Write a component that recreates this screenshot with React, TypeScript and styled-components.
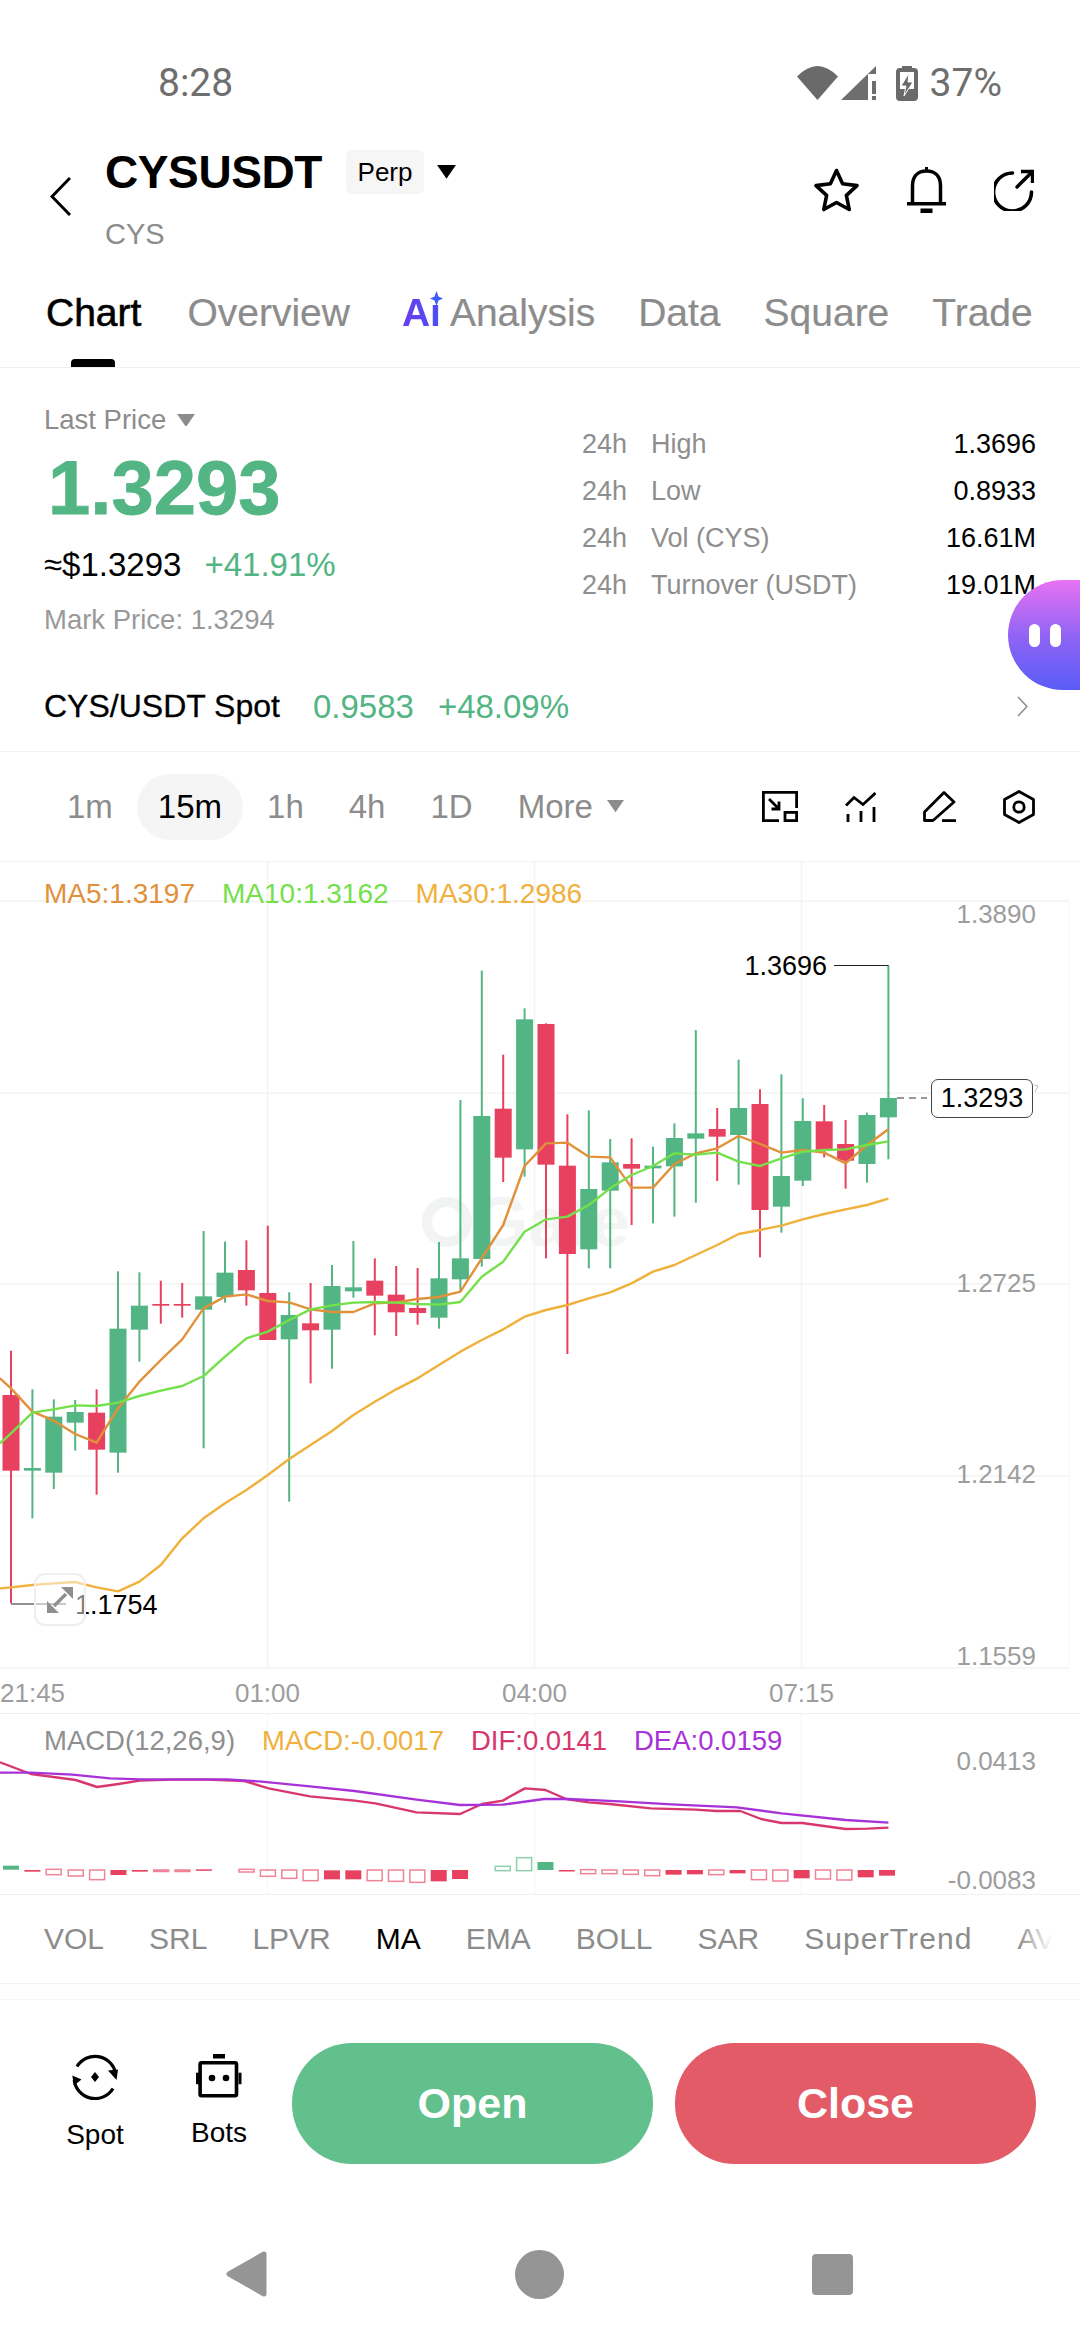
import React from "react";
import styled, { createGlobalStyle } from "styled-components";

const GlobalStyle = createGlobalStyle`
  * { box-sizing: border-box; }
  html, body { margin: 0; padding: 0; background: #fff; }
  body { font-family: "Liberation Sans", Arial, sans-serif; color: #000; }
`;

const GREEN = "#52b583";
const RED = "#e8405f";
const GREY = "#8c8c8c";

const Page = styled.div`
  position: relative;
  width: 1080px;
  height: 2340px;
  overflow: hidden;
  background: #fff;
`;

const StatusBar = styled.div`
  display: flex;
  justify-content: space-between;
  align-items: center;
  height: 140px;
  padding: 26px 78px 0 158px;
  font-family: Roboto, sans-serif;
  font-size: 39px;
  color: #6e6e6e;
`;

const StatusIcons = styled.div`
  display: flex;
  align-items: center;
  gap: 12px;
`;

const SignalGroup = styled.div`
  display: flex;
  align-items: center;
  gap: 3px;
  margin-right: 8px;
`;

const Header = styled.div`
  display: flex;
  align-items: flex-start;
  height: 116px;
  padding: 8px 46px 0 50px;
`;

const BackButton = styled.div`
  display: flex;
  margin: 29px 34px 0 0;
`;

const TitleBlock = styled.div`
  display: flex;
  flex-direction: column;
`;

const TitleRow = styled.div`
  display: flex;
  align-items: center;
  height: 48px;
`;

const Title = styled.div`
  font-size: 46px;
  font-weight: 700;
  letter-spacing: -0.4px;
`;

const Badge = styled.div`
  display: flex;
  align-items: center;
  justify-content: center;
  width: 78px;
  height: 44px;
  margin: 0 13px 0 24px;
  background: #f6f6f6;
  border-radius: 6px;
  font-size: 26px;
`;

const SubTitle = styled.div`
  margin-top: 15px;
  font-size: 29px;
  line-height: 46px;
  color: ${GREY};
`;

const HeaderActions = styled.div`
  display: flex;
  align-items: center;
  gap: 48px;
  margin: 19px 0 0 auto;
`;

const Tabs = styled.div`
  display: flex;
  height: 112px;
  padding: 34px 0 0 46px;
  gap: 43px;
  border-bottom: 1px solid #f0f0f0;
`;

const Tab = styled.div<{ $active?: boolean; $offset?: number }>`
  position: relative;
  display: flex;
  height: 46px;
  align-items: center;
  margin-left: ${(p) => p.$offset ?? 0}px;
  font-size: 39px;
  color: ${(p) => (p.$active ? "#000" : GREY)};
  -webkit-text-stroke: ${(p) => (p.$active ? "0.6px #000" : "0.2px #8c8c8c")};

  ${(p) =>
    p.$active &&
    `&::after {
      content: "";
      position: absolute;
      left: 25px;
      top: 69px;
      width: 44px;
      height: 8px;
      border-radius: 4px 4px 0 0;
      background: #000;
    }`}
`;

const AiMark = styled.span`
  position: relative;
  margin-right: 9px;
  font-weight: 700;
  background: linear-gradient(90deg, #6a3df0, #4a50f5);
  -webkit-background-clip: text;
  background-clip: text;
  color: transparent;
  -webkit-text-stroke: 0;
`;

const AiStar = styled.svg`
  position: absolute;
  right: -2px;
  top: 0;
`;

const PriceSection = styled.div`
  display: flex;
  justify-content: space-between;
  padding: 35px 44px 0;
`;

const PriceLeft = styled.div`
  display: flex;
  flex-direction: column;
`;

const LastPrice = styled.div`
  display: flex;
  align-items: center;
  gap: 11px;
  font-size: 27.5px;
  line-height: 34px;
  color: ${GREY};
`;

const BigPrice = styled.div`
  margin: 11px 0 0 4px;
  font-size: 76px;
  font-weight: 700;
  line-height: 80px;
  color: ${GREEN};
  -webkit-text-stroke: 0.8px ${GREEN};
`;

const SubRow = styled.div`
  display: flex;
  gap: 23px;
  margin-top: 17px;
  font-size: 33px;
  line-height: 40px;
`;

const Up = styled.span`
  color: ${GREEN};
`;

const MarkPrice = styled.div`
  margin-top: 18px;
  font-size: 27.5px;
  line-height: 34px;
  color: #999;
`;

const Stats = styled.div`
  display: flex;
  flex-direction: column;
  width: 454px;
  margin-top: 18px;
`;

const StatRow = styled.div`
  display: flex;
  align-items: center;
  height: 47px;
  font-size: 27px;
  color: #8e8e8e;
`;

const StatPeriod = styled.span`
  width: 69px;
`;

const StatValue = styled.span`
  margin-left: auto;
  font-size: 27px;
  color: #000;
`;

const SpotRow = styled.div`
  display: flex;
  align-items: center;
  gap: 24px;
  height: 65px;
  margin-top: 50px;
  padding: 0 52px 25px 44px;
  border-bottom: 1px solid #f2f2f2;
  font-size: 33px;
`;

const SpotName = styled.span`
  margin-right: 9px;
  font-size: 32px;
  -webkit-text-stroke: 0.3px #000;
`;

const Chevron = styled.svg`
  margin-left: auto;
`;

const Toolbar = styled.div`
  display: flex;
  align-items: center;
  height: 110px;
  padding: 0 45px 0 46px;
  border-bottom: 1px solid #f2f2f2;
  gap: 3px;
`;

const Interval = styled.div<{ $active?: boolean }>`
  display: flex;
  align-items: center;
  gap: 14px;
  height: 66px;
  padding: 0 21px;
  border-radius: 33px;
  font-size: 33px;
  background: ${(p) => (p.$active ? "#f5f5f5" : "transparent")};
  color: ${(p) => (p.$active ? "#000" : GREY)};
`;

const ToolIcons = styled.div`
  display: flex;
  align-items: center;
  gap: 47px;
  margin-left: auto;
`;

const ChartPane = styled.div`
  position: relative;
  height: 852px;
  border-bottom: 1px solid #f0f0f0;
`;

const Legend = styled.div<{ $top: number; $size: number; $gap: number }>`
  position: absolute;
  left: 44px;
  top: ${(p) => p.$top}px;
  display: flex;
  gap: ${(p) => p.$gap}px;
  font-size: ${(p) => p.$size}px;
  line-height: 34px;
`;

const LegendItem = styled.span<{ $color: string }>`
  color: ${(p) => p.$color};
`;

const ChartSvg = styled.svg`
  display: block;
  overflow: visible;
  font-family: "Liberation Sans", Arial, sans-serif;
`;

const AxisLabel = styled.text`
  font-size: 26px;
  fill: #9d9d9d;
  dominant-baseline: central;
`;

const PriceCallout = styled.text`
  font-size: 27px;
  fill: #000;
  dominant-baseline: central;
`;

const Watermark = styled.text`
  font-size: 70px;
  font-weight: 700;
  fill: #f3f4f4;
`;

const PriceTag = styled.div`
  position: absolute;
  left: 931px;
  top: 217px;
  display: flex;
  align-items: center;
  justify-content: center;
  width: 102px;
  height: 39px;
  background: #fff;
  border: 1.5px solid #444;
  border-radius: 7px;
  font-size: 27px;
`;

const ExpandButton = styled.div`
  position: absolute;
  left: 34px;
  top: 711px;
  display: flex;
  align-items: center;
  justify-content: center;
  width: 52px;
  height: 53px;
  background: rgba(255, 255, 255, 0.5);
  border: 2px solid #efefef;
  border-radius: 11px;
`;

const MacdPane = styled.div`
  position: relative;
  height: 181px;
  border-bottom: 1px solid #f0f0f0;
`;

const IndicatorRow = styled.div`
  position: relative;
  display: flex;
  align-items: center;
  gap: 45px;
  height: 89px;
  padding-left: 44px;
  overflow: hidden;
  white-space: nowrap;
  border-bottom: 1px solid #f2f2f2;

  &::after {
    content: "";
    position: absolute;
    right: 0;
    top: 0;
    bottom: 0;
    width: 62px;
    background: linear-gradient(90deg, rgba(255, 255, 255, 0), #fff 55%);
  }
`;

const Indicator = styled.span<{ $active?: boolean }>`
  font-size: 30px;
  color: ${(p) => (p.$active ? "#000" : GREY)};

  &:nth-last-child(2) {
    letter-spacing: 1.1px;
  }
`;

const Band = styled.div`
  height: 16px;
  border-bottom: 1px solid #f6f6f6;
  background: #fefefe;
`;

const TradeBar = styled.div`
  display: flex;
  align-items: flex-start;
  padding: 43px 44px 0 53px;
`;

const TradeLink = styled.div`
  display: flex;
  flex-direction: column;
  align-items: center;
  width: 84px;
  margin-right: 40px;
  padding-top: 11px;
  font-size: 28px;
  gap: 19px;
  line-height: 32px;

  &:nth-child(2) {
    margin-right: 31px;
  }
`;

const TradeButton = styled.div<{ $color: string }>`
  display: flex;
  align-items: center;
  justify-content: center;
  width: 361px;
  height: 121px;
  border-radius: 60px;
  background: ${(p) => p.$color};
  color: #fff;
  font-size: 43px;
  font-weight: 700;

  & + & {
    margin-left: 22px;
  }
`;

const NavBar = styled.div`
  display: flex;
  align-items: center;
  gap: 248px;
  height: 50px;
  margin-top: 85px;
  padding-left: 226px;
`;

const FloatButton = styled.div`
  position: absolute;
  right: 0;
  top: 580px;
  display: flex;
  align-items: center;
  gap: 10px;
  width: 72px;
  height: 110px;
  padding: 0 16px 0 21px;
  border-radius: 55px 0 0 55px / 55px 0 0 55px;
  background: linear-gradient(180deg, #e772f2 0%, #8a63f5 55%, #5a5cf7 100%);
`;

const Pill = styled.div`
  width: 11px;
  height: 23px;
  border-radius: 6px;
  background: #fff;
`;

// [up, wickTop, wickBottom, bodyTop, bodyBottom], y in 1/3 px from y=860
type Candle = [number, number, number, number, number];
const candles: Candle[] = [
  [0, 1472, 2230, 1605, 1832],
  [1, 1588, 1975, 1824, 1832],
  [1, 1618, 1887, 1670, 1838],
  [1, 1620, 1772, 1656, 1688],
  [0, 1588, 1904, 1658, 1769],
  [1, 1234, 1838, 1406, 1778],
  [1, 1237, 1505, 1337, 1409],
  [0, 1262, 1391, 1332, 1337],
  [0, 1269, 1373, 1332, 1337],
  [1, 1113, 1765, 1309, 1349],
  [1, 1145, 1328, 1238, 1311],
  [0, 1141, 1337, 1230, 1291],
  [0, 1097, 1440, 1299, 1440],
  [1, 1297, 1925, 1365, 1438],
  [0, 1269, 1570, 1390, 1411],
  [1, 1215, 1526, 1278, 1409],
  [1, 1143, 1313, 1282, 1294],
  [0, 1195, 1426, 1262, 1307],
  [0, 1218, 1428, 1304, 1357],
  [0, 1224, 1394, 1344, 1359],
  [1, 1146, 1406, 1255, 1373],
  [1, 720, 1296, 1195, 1258],
  [1, 332, 1220, 768, 1197],
  [0, 584, 966, 746, 893],
  [1, 445, 950, 478, 868],
  [0, 490, 1195, 492, 914],
  [0, 763, 1482, 917, 1182],
  [1, 751, 1225, 987, 1168],
  [1, 837, 1225, 907, 992],
  [0, 835, 1095, 912, 926],
  [1, 860, 1090, 917, 925],
  [1, 790, 1070, 834, 919],
  [1, 510, 1028, 820, 836],
  [0, 744, 963, 807, 830],
  [1, 599, 974, 744, 825],
  [0, 688, 1192, 732, 1050],
  [1, 643, 1118, 948, 1040],
  [1, 715, 978, 783, 962],
  [0, 735, 892, 784, 870],
  [0, 780, 986, 852, 902],
  [1, 758, 968, 765, 912],
  [1, 316, 898, 714, 772],
];

const ma5 = [1585, 1655, 1682, 1722, 1748, 1645, 1565, 1500, 1438, 1345, 1310, 1303, 1323, 1327, 1348, 1356, 1356, 1330, 1327, 1317, 1311, 1295, 1195, 1095, 918, 850, 848, 890, 892, 983, 983, 912, 880, 865, 828, 852, 878, 870, 878, 910, 855, 808];
const ma10 = [1720, 1658, 1648, 1636, 1638, 1628, 1608, 1592, 1578, 1548, 1490, 1435, 1415, 1380, 1348, 1336, 1328, 1326, 1328, 1332, 1334, 1326, 1250, 1205, 1115, 1078, 1070, 1035, 985, 945, 918, 880, 884, 878, 905, 918, 895, 875, 870, 868, 855, 844];
const ma30 = [2182, 2175, 2170, 2166, 2182, 2194, 2165, 2115, 2035, 1975, 1930, 1890, 1845, 1797, 1755, 1713, 1665, 1625, 1588, 1555, 1515, 1475, 1440, 1408, 1370, 1350, 1335, 1315, 1297, 1270, 1235, 1215, 1185, 1155, 1122, 1110, 1097, 1078, 1062, 1048, 1035, 1016];

const candleX = (i: number) => 11 + 21.4 * i;
const toY = (u: number) => u / 3 - 2;

const linePoints = (values: number[], startU: number) =>
  `0,${toY(startU)} ` + values.map((u, i) => `${candleX(i)},${toY(u)}`).join(" ");

const grid = [124, 700, 1272, 1848, 2424];
const gridX = [267.5, 534.5, 801.5];

const macdX = (z: number) => z / 1.452;
const macdY = (z: number) => z / 3 - 35;

const dif = [[0, 250], [45, 285], [110, 303], [141, 324], [172, 315], [203, 305], [250, 302], [300, 302], [355, 306], [390, 328], [450, 352], [515, 365], [545, 373], [605, 400], [668, 405], [700, 375], [730, 365], [762, 328], [792, 333], [822, 360], [855, 370], [885, 375], [945, 388], [1010, 392], [1040, 396], [1075, 396], [1105, 420], [1135, 432], [1165, 432], [1228, 450], [1260, 449], [1290, 446]];
const dea = [[0, 281], [45, 281], [105, 287], [160, 298], [205, 301], [330, 301], [380, 308], [450, 322], [515, 336], [605, 362], [668, 378], [730, 377], [790, 360], [825, 360], [900, 367], [975, 376], [1070, 385], [1135, 403], [1228, 423], [1290, 431]];

const toPoints = (pts: number[][]) => pts.map(([x, y]) => `${macdX(x)},${macdY(y)}`).join(" ");

// [zoomX, top, bottom, solid, green]
const macdBars: [number, number, number, number, number][] = [
  [16, 560, 572, 1, 1], [47, 573, 578, 1, 0], [78, 571, 587, 0, 0], [110, 573, 591, 0, 0], [141, 573, 602, 0, 0],
  [172, 573, 588, 1, 0], [203, 573, 578, 1, 0], [234, 573, 575, 0, 0], [265, 573, 575, 0, 0], [296, 571, 575, 1, 0],
  [358, 571, 579, 0, 0], [389, 573, 592, 0, 0], [420, 573, 598, 0, 0], [451, 573, 605, 0, 0], [482, 574, 601, 1, 0],
  [513, 574, 601, 1, 0], [544, 573, 605, 0, 0], [575, 573, 607, 0, 0], [606, 573, 610, 0, 0], [637, 573, 607, 1, 0],
  [668, 573, 600, 1, 0], [730, 562, 575, 0, 1], [761, 536, 575, 0, 1], [792, 549, 573, 1, 1], [823, 573, 575, 1, 0],
  [854, 572, 584, 0, 0], [885, 573, 584, 0, 0], [916, 573, 586, 0, 0], [947, 573, 590, 0, 0], [978, 573, 587, 1, 0],
  [1009, 573, 586, 1, 0], [1040, 573, 587, 0, 0], [1071, 573, 583, 1, 0], [1102, 573, 602, 0, 0], [1133, 573, 606, 0, 0],
  [1164, 573, 598, 1, 0], [1195, 573, 600, 0, 0], [1226, 573, 603, 0, 0], [1257, 573, 595, 1, 0], [1288, 573, 590, 1, 0],
];

const stats = [
  ["High", "1.3696"],
  ["Low", "0.8933"],
  ["Vol (CYS)", "16.61M"],
  ["Turnover (USDT)", "19.01M"],
];

const intervals = ["1m", "15m", "1h", "4h", "1D"];
const indicators = ["VOL", "SRL", "LPVR", "MA", "EMA", "BOLL", "SAR", "SuperTrend", "AVL"];

const Caret = ({ size = 18, color = "#000" }: { size?: number; color?: string }) => (
  <svg width={size} height={size * 0.72} viewBox="0 0 18 13">
    <path d="M0 0H18L9 13Z" fill={color} />
  </svg>
);

const MainChart = () => (
  <ChartSvg width={1080} height={851} viewBox="0 0 1080 851">
    {grid.map((u) => (
      <line key={u} x1={0} x2={1069} y1={toY(u)} y2={toY(u)} stroke="#f3f3f3" strokeWidth={1.5} />
    ))}
    {gridX.map((x) => (
      <line key={x} x1={x} x2={x} y1={0} y2={806} stroke="#f3f3f3" strokeWidth={1.5} />
    ))}
    <line x1={1069} x2={1069} y1={39} y2={806} stroke="#f7f7f7" />

    <circle cx={447} cy={360} r={20} fill="none" stroke="#f2f3f3" strokeWidth={10} />
    <Watermark x={474} y={384}>Gate</Watermark>

    {candles.map(([up, wt, wb, bt, bb], i) => {
      const color = up ? GREEN : RED;
      return (
        <g key={i}>
          <rect x={candleX(i) - 1} y={toY(wt)} width={2} height={(wb - wt) / 3} fill={color} />
          <rect x={candleX(i) - 8.5} y={toY(bt)} width={17} height={(bb - bt) / 3} fill={color} />
        </g>
      );
    })}

    <polyline points={linePoints(ma30, 2185)} fill="none" stroke="#efb03c" strokeWidth={2.4} strokeLinejoin="round" />
    <polyline points={linePoints(ma5, 1555)} fill="none" stroke="#e0913a" strokeWidth={2.4} strokeLinejoin="round" />
    <polyline points={linePoints(ma10, 1750)} fill="none" stroke="#74e04a" strokeWidth={2.4} strokeLinejoin="round" />

    <AxisLabel x={1036} y={52} textAnchor="end">1.3890</AxisLabel>
    <AxisLabel x={1036} y={421} textAnchor="end">1.2725</AxisLabel>
    <AxisLabel x={1036} y={612} textAnchor="end">1.2142</AxisLabel>
    <AxisLabel x={1036} y={794} textAnchor="end">1.1559</AxisLabel>

    <path d="M834 103.5H888.5" stroke="#222" strokeWidth={1.2} fill="none" />
    <PriceCallout x={827} y={104} textAnchor="end">1.3696</PriceCallout>

    <path d="M11 742H66" stroke="#222" strokeWidth={1.2} fill="none" />
    <PriceCallout x={75} y={743}>1.1754</PriceCallout>

    <path d="M897 236H927" stroke="#777" strokeWidth={1.5} strokeDasharray="7 5" fill="none" />
    <path d="M1034 223l4 1-3 6" stroke="#bbb" strokeWidth={1} fill="none" />

    <AxisLabel x={0} y={831}>21:45</AxisLabel>
    <AxisLabel x={267.5} y={831} textAnchor="middle">01:00</AxisLabel>
    <AxisLabel x={534.5} y={831} textAnchor="middle">04:00</AxisLabel>
    <AxisLabel x={801.5} y={831} textAnchor="middle">07:15</AxisLabel>
  </ChartSvg>
);

const MacdChart = () => (
  <ChartSvg width={1080} height={180} viewBox="0 0 1080 180">
    {gridX.map((x) => (
      <line key={x} x1={x} x2={x} y1={0} y2={180} stroke="#f7f7f7" strokeWidth={1.5} />
    ))}
    {macdBars.map(([x, top, bottom, solid, green]) => {
      const color = green ? GREEN : RED;
      const y = macdY(top);
      const h = Math.max((bottom - top) / 3, 1.5);
      return solid ? (
        <rect key={x} x={macdX(x) - 8} y={y} width={16} height={h} fill={color} />
      ) : (
        <rect key={x} x={macdX(x) - 7.5} y={y} width={15} height={h} fill="none" stroke={color} strokeOpacity={0.65} strokeWidth={1.5} />
      );
    })}
    <polyline points={toPoints(dif)} fill="none" stroke="#d8366f" strokeWidth={2.4} strokeLinejoin="round" />
    <polyline points={toPoints(dea)} fill="none" stroke="#a733d8" strokeWidth={2.4} strokeLinejoin="round" />
    <AxisLabel x={1036} y={47} textAnchor="end">0.0413</AxisLabel>
    <AxisLabel x={1036} y={166} textAnchor="end">-0.0083</AxisLabel>
  </ChartSvg>
);

export default function App() {
  return (
    <Page>
      <GlobalStyle />

      <StatusBar>
        <span>8:28</span>
        <StatusIcons>
          <SignalGroup>
            <svg width={41} height={34} viewBox="0 0 41 34">
              <path d="M0 10.5Q20.5 -10.5 41 10.5L20.5 34Z" fill="#6a6a6a" />
            </svg>
            <svg width={35} height={34} viewBox="0 0 35 34">
              <path d="M0 34L35 0V8H27V34Z" fill="#6e6e6e" />
              <path d="M31 15h4v13h-4zM31 30h4v4h-4z" fill="#6e6e6e" />
            </svg>
          </SignalGroup>
          <svg width={22} height={35} viewBox="0 0 22 35">
            <rect x={6} y={0} width={10} height={5} fill="#6a6a6a" />
            <rect x={2} y={4} width={18} height={29} rx={2} fill="none" stroke="#6a6a6a" strokeWidth={4} />
            <rect x={2} y={23} width={18} height={10} fill="#6a6a6a" />
            <path d="M13 7L5 20h5l-2 10 9-14h-5z" fill="#6a6a6a" stroke="#fff" strokeWidth={1} />
          </svg>
          <span>37%</span>
        </StatusIcons>
      </StatusBar>

      <Header>
        <BackButton>
          <svg width={21} height={39} viewBox="0 0 21 39">
            <path d="M20 1L2 19.5L20 38" fill="none" stroke="#000" strokeWidth={3} />
          </svg>
        </BackButton>
        <TitleBlock>
          <TitleRow>
            <Title>CYSUSDT</Title>
            <Badge>Perp</Badge>
            <Caret size={19} />
          </TitleRow>
          <SubTitle>CYS</SubTitle>
        </TitleBlock>
        <HeaderActions>
          <svg width={45} height={44} viewBox="0 0 45 44">
            <path
              d="M22.5 2.5L28.6 15.7L43 17.6L32.4 27.4L35.2 41.5L22.5 34.5L9.8 41.5L12.6 27.4L2 17.6L16.4 15.7Z"
              fill="none"
              stroke="#000"
              strokeWidth={3.6}
              strokeLinejoin="round"
            />
          </svg>
          <svg width={39} height={46} viewBox="0 0 39 46">
            <path d="M19.5 0v5" stroke="#000" strokeWidth={3} />
            <path d="M5.5 37V19C5.5 9 11 4 19.5 4S33.5 9 33.5 19V37" fill="none" stroke="#000" strokeWidth={3.5} />
            <path d="M0 36.7H39" stroke="#000" strokeWidth={3.5} />
            <rect x={13.5} y={41.5} width={12} height={4.5} fill="#000" />
          </svg>
          <svg width={40} height={42} viewBox="0 0 40 42">
            <path d="M18.5 4A19 19 0 1 0 37.5 23" fill="none" stroke="#000" strokeWidth={3.6} strokeLinecap="round" />
            <path d="M23 18L38 3" fill="none" stroke="#000" strokeWidth={3.4} strokeLinecap="round" />
            <path d="M27 2.5H38.5V14" fill="none" stroke="#000" strokeWidth={3.4} />
          </svg>
        </HeaderActions>
      </Header>

      <Tabs>
        <Tab $active>Chart</Tab>
        <Tab $offset={3}>Overview</Tab>
        <Tab $offset={9}>
          <AiMark>
            Aı
            <AiStar width={13} height={15} viewBox="0 0 13 15">
              <path d="M6.5 0L8.5 5.5L13 7.5L8.5 9.5L6.5 15L4.5 9.5L0 7.5L4.5 5.5Z" fill="#3f5cf7" />
            </AiStar>
          </AiMark>
          Analysis
        </Tab>
        <Tab>Data</Tab>
        <Tab>Square</Tab>
        <Tab>Trade</Tab>
      </Tabs>

      <PriceSection>
        <PriceLeft>
          <LastPrice>
            Last Price
            <Caret size={18} color="#8c8c8c" />
          </LastPrice>
          <BigPrice>1.3293</BigPrice>
          <SubRow>
            <span>≈$1.3293</span>
            <Up>+41.91%</Up>
          </SubRow>
          <MarkPrice>Mark Price: 1.3294</MarkPrice>
        </PriceLeft>
        <Stats>
          {stats.map(([label, value]) => (
            <StatRow key={label}>
              <StatPeriod>24h</StatPeriod>
              {label}
              <StatValue>{value}</StatValue>
            </StatRow>
          ))}
        </Stats>
      </PriceSection>

      <SpotRow>
        <SpotName>CYS/USDT Spot</SpotName>
        <Up>0.9583</Up>
        <Up>+48.09%</Up>
        <Chevron width={11} height={21} viewBox="0 0 11 21">
          <path d="M1 1L10 10.5L1 20" fill="none" stroke="#8c8c8c" strokeWidth={1.6} />
        </Chevron>
      </SpotRow>

      <Toolbar>
        {intervals.map((item) => (
          <Interval key={item} $active={item === "15m"}>
            {item}
          </Interval>
        ))}
        <Interval>
          More
          <Caret size={17} color="#8c8c8c" />
        </Interval>
        <ToolIcons>
          <svg width={36} height={31} viewBox="0 0 36 31">
            <path d="M34.6 17V1.4H1.4V29.6H17" fill="none" stroke="#000" strokeWidth={2.8} />
            <rect x={23} y={21.4} width={11.6} height={8.2} fill="none" stroke="#000" strokeWidth={2.8} />
            <path d="M7 8L17 18M17 10.5V18H9.5" fill="none" stroke="#000" strokeWidth={2.8} />
          </svg>
          <svg width={31} height={30} viewBox="0 0 31 30">
            <path d="M1 13.5L9 5.5L18 12.5L30.5 1" fill="none" stroke="#000" strokeWidth={2.8} />
            <path d="M3 22V30M16 19V30M29 15V30" stroke="#000" strokeWidth={2.8} />
          </svg>
          <svg width={33} height={31} viewBox="0 0 33 31">
            <path d="M1.5 21L21 1.5L31 11L10 29.5H1.5Z" fill="none" stroke="#000" strokeWidth={2.8} strokeLinejoin="round" />
            <path d="M19 29.6H33" stroke="#000" strokeWidth={2.8} />
          </svg>
          <svg width={32} height={34} viewBox="0 0 32 34">
            <path d="M16 1.5L30.5 9.5V24.5L16 32.5L1.5 24.5V9.5Z" fill="none" stroke="#000" strokeWidth={2.8} strokeLinejoin="round" />
            <circle cx={16} cy={17} r={5.2} fill="none" stroke="#000" strokeWidth={2.8} />
          </svg>
        </ToolIcons>
      </Toolbar>

      <ChartPane>
        <MainChart />
        <Legend $top={15} $size={28} $gap={27}>
          <LegendItem $color="#e0913a">MA5:1.3197</LegendItem>
          <LegendItem $color="#74e04a">MA10:1.3162</LegendItem>
          <LegendItem $color="#efb03c">MA30:1.2986</LegendItem>
        </Legend>
        <PriceTag>1.3293</PriceTag>
        <ExpandButton>
          <svg width={26} height={26} viewBox="0 0 26 26">
            <path d="M26 0V12L14 0Z M0 26V14L12 26Z" fill="#8f8f8f" />
            <path d="M19 7L7 19" stroke="#8f8f8f" strokeWidth={3.4} />
          </svg>
        </ExpandButton>
      </ChartPane>

      <MacdPane>
        <MacdChart />
        <Legend $top={10} $size={27.5} $gap={27}>
          <LegendItem $color="#8f8f8f">MACD(12,26,9)</LegendItem>
          <LegendItem $color="#efb03c">MACD:-0.0017</LegendItem>
          <LegendItem $color="#d8366f">DIF:0.0141</LegendItem>
          <LegendItem $color="#a733d8">DEA:0.0159</LegendItem>
        </Legend>
      </MacdPane>

      <IndicatorRow>
        {indicators.map((item) => (
          <Indicator key={item} $active={item === "MA"}>
            {item}
          </Indicator>
        ))}
      </IndicatorRow>
      <Band />

      <TradeBar>
        <TradeLink>
          <svg width={46} height={46} viewBox="0 0 46 46">
            <path d="M5 12.5A21 21 0 0 1 43.5 19" fill="none" stroke="#000" strokeWidth={3.2} />
            <path d="M41 34.5A21 21 0 0 1 2.2 26" fill="none" stroke="#000" strokeWidth={3.2} />
            <path d="M36 16.5L46 15.5L44.5 26Z M0.3 21.5L9.5 25.5L2 31.5Z" fill="#000" />
            <path d="M23 18L27 23L23 28L19 23Z" fill="#000" />
          </svg>
          Spot
        </TradeLink>
        <TradeLink>
          <svg width={46} height={44} viewBox="0 0 46 44">
            <rect x={17} y={0} width={12} height={4.5} fill="#000" />
            <rect x={4.1} y={8.8} width={36.4} height={33} rx={1.5} fill="none" stroke="#000" strokeWidth={3.6} />
            <rect x={0} y={18.7} width={3} height={11.5} fill="#000" />
            <rect x={42.5} y={18.7} width={3} height={11.5} fill="#000" />
            <circle cx={16} cy={24} r={3.3} fill="#000" />
            <circle cx={30} cy={24} r={3.3} fill="#000" />
          </svg>
          Bots
        </TradeLink>
        <TradeButton $color="#62c08d">Open</TradeButton>
        <TradeButton $color="#e35b66">Close</TradeButton>
      </TradeBar>

      <NavBar>
        <svg width={41} height={46} viewBox="0 0 41 46">
          <path d="M38 3V43L3 23Z" fill="#959595" stroke="#959595" strokeWidth={5} strokeLinejoin="round" />
        </svg>
        <svg width={49} height={49} viewBox="0 0 49 49">
          <circle cx={24.5} cy={24.5} r={24.5} fill="#959595" />
        </svg>
        <svg width={41} height={41} viewBox="0 0 41 41">
          <rect width={41} height={41} rx={4} fill="#959595" />
        </svg>
      </NavBar>

      <FloatButton>
        <Pill />
        <Pill />
      </FloatButton>
    </Page>
  );
}
